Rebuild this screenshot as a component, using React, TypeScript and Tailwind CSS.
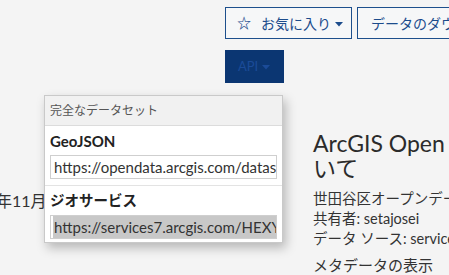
import React from "react";

const latin = "font-['Lato','Noto_Sans_CJK_JP',sans-serif]";

function Caret({ className = "" }: { className?: string }) {
  return (
    <svg width="8" height="5" viewBox="0 0 8 5" className={className}>
      <path d="M0 0 L8 0 L4 4.5 Z" fill="currentColor" />
    </svg>
  );
}

export default function App() {
  return (
    <div className={`relative w-[449px] h-[275px] overflow-hidden bg-[#f4f4f4] text-[#333] ${latin}`}>
      {/* Top buttons */}
      <div className="flex gap-[5px] pl-[225px] pt-[7px]">
        <div className="flex h-[32px] w-[127px] shrink-0 items-center border border-[#1d4f8c] bg-[#f6f7f8] pl-[11px] text-[14px] text-[#1c4c8c]">
          <span className="text-[14px] leading-none font-bold">☆</span>
          <span className="ml-[10px]">お気に入り</span>
          <Caret className="ml-[4px] mt-[2px]" />
        </div>
        <div className="flex h-[32px] w-[160px] shrink-0 items-center border border-[#1d4f8c] bg-[#f6f7f8] pl-[13px] text-[14px] text-[#1c4c8c] whitespace-nowrap">
          データのダウンロード
        </div>
      </div>
      <div className="ml-[225px] mt-[11px] flex h-[33px] w-[59px] items-center bg-[#0b3672] pl-[13px] text-[13px] text-[#1b4b98]">
        <span>API</span>
        <Caret className="ml-[4px] mt-[1px]" />
      </div>

      {/* Body */}
      <div className="flex">
        <div className="w-[313px] shrink-0 pt-[108px]">
          <div className="ml-[-4px] text-[16px] leading-[20px] whitespace-nowrap">年11月</div>
        </div>
        <div className="pt-[48px] whitespace-nowrap">
          <div className="text-[23px] leading-[25px] text-[#2b2b2b]">ArcGIS Open Data につ</div>
          <div className="text-[23px] leading-[25px] text-[#2b2b2b]">いて</div>
          <div className="mt-[8px] text-[14.5px] leading-[20px]">世田谷区オープンデータ</div>
          <div className="text-[14.5px] leading-[20px]">共有者: setajosei</div>
          <div className="text-[14.5px] leading-[20px]">データ ソース: services7.arcgis.com</div>
          <div className="mt-[6px] text-[15px] leading-[20px]">メタデータの表示</div>
        </div>
      </div>

      {/* Dropdown menu */}
      <div className="absolute left-[44px] top-[95px] w-[239px] border border-[#c9c9c9] bg-white shadow-[3px_5px_10px_rgba(0,0,0,0.25)]">
        <div className="flex h-[30px] items-center border-b border-[#dcdcdc] bg-[#f1f1f1] pl-[5px] text-[12px] text-[#555]">
          完全なデータセット
        </div>
        <div className="px-[5px]">
          <div className="pt-[5px] text-[15px] font-bold leading-[20px] text-[#222]">GeoJSON</div>
          <div className="mt-[4px] flex h-[24px] items-center overflow-hidden border border-[#cfcfcf] bg-white pl-[3px] text-[15px] text-[#333] whitespace-nowrap">
            https://opendata.arcgis.com/datasets/f8e6b1a.geojson
          </div>
        </div>
        <div className="mt-[6px] border-t border-[#e3e3e3] px-[5px]">
          <div className="pt-[5px] text-[14.5px] font-bold leading-[20px] text-[#222]">ジオサービス</div>
          <div className="mt-[4px] mb-[3px] flex h-[24px] items-center overflow-hidden border border-[#cfcfcf] bg-white pl-[2px] text-[15px] text-[#333] whitespace-nowrap">
            <span className="bg-[#c8c8c8] px-[1px]">https://services7.arcgis.com/HEXYKi3WjAZgPBkN/arcgis/rest/services</span>
          </div>
        </div>
      </div>
    </div>
  );
}
